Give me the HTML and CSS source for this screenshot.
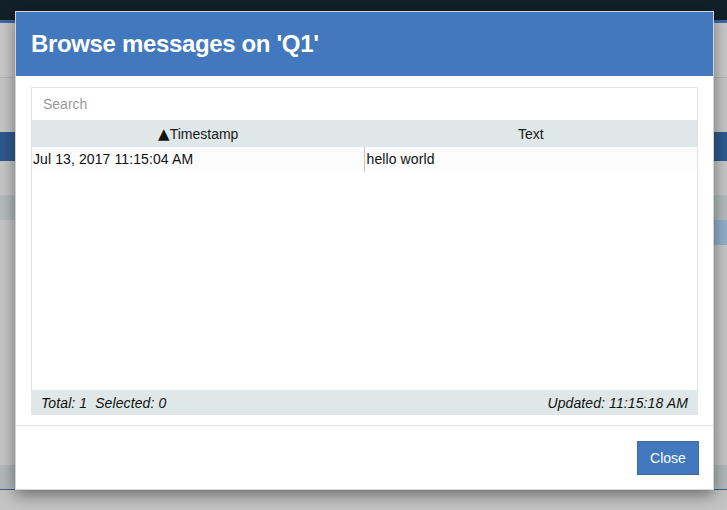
FILE: index.html
```html
<!DOCTYPE html>
<html>
<head>
<meta charset="utf-8">
<title>Browse messages</title>
<link rel="stylesheet" href="styles.css">
</head>
<body>
<div class="page">
  <div class="band topbar"></div>
  <div class="band accent"></div>
  <div class="band nav"></div>
  <div class="band gray tall"></div>
  <div class="band tabbar"></div>
  <div class="band gray mid"></div>
  <div class="band thead"></div>
  <div class="band selrow"><div class="sel-spacer"></div><div class="sel-cell"><span class="sel-mark"></span></div></div>
  <div class="band gray rest"></div>
  <div class="band tfoot"></div>
  <div class="band bottom"></div>
</div>

<div class="modal">
  <div class="modal-header">
    <h1 class="modal-title">Browse messages on 'Q1'</h1>
  </div>
  <div class="modal-body">
    <div class="grid">
      <div class="search">Search</div>
      <div class="grid-head">
        <div class="hcell"><span class="sort">&#9650;</span>Timestamp</div>
        <div class="hcell">Text</div>
      </div>
      <div class="grid-row">
        <div class="cell">Jul 13, 2017 11:15:04 AM</div>
        <div class="cell divider">hello world</div>
      </div>
      <div class="grid-empty"></div>
      <div class="grid-foot">
        <span class="stats">Total: 1&nbsp;&nbsp;Selected: 0</span>
        <span class="updated">Updated: 11:15:18 AM</span>
      </div>
    </div>
  </div>
  <div class="modal-footer">
    <button class="btn-close">Close</button>
  </div>
</div>
</body>
</html>
```

FILE: styles.css
```css
html, body {
  margin: 0;
  padding: 0;
}
body {
  width: 727px;
  height: 510px;
  overflow: hidden;
  background: #c4c4c4;
  font-family: "Liberation Sans", Arial, Helvetica, sans-serif;
  font-size: 14px;
  color: #111;
  position: relative;
}

.page {
  display: flex;
  flex-direction: column;
}
.band { width: 100%; }
.topbar { height: 20px; background: #12202a; }
.accent { height: 3px; background: #3e6aa0; }
.nav { height: 54px; background: #c9c9c9; border-bottom: 1px solid #b6b6b6; }
.gray { background: #c6c6c6; }
.tall { height: 54px; }
.tabbar { height: 29px; background: #2e5a8e; }
.mid { height: 34px; }
.thead { height: 25px; background: #b3bbbb; }
.selrow { height: 25px; display: flex; background: #c6c6c6; }
.sel-spacer { flex: 1; }
.sel-cell { width: 30px; background: #92afc8; display: flex; align-items: center; }
.sel-mark { width: 2px; height: 10px; margin-left: 15px; background: #2c4a6c; }
.rest { height: 220px; }
.tfoot { height: 24px; background: #b1b9b9; border-bottom: 1px solid #3b5f8e; }
.bottom { height: 20px; background: #c4c4c4; }

/* modal */
.modal {
  position: absolute;
  left: 15px;
  top: 11px;
  width: 699px;
  height: 479px;
  box-sizing: border-box;
  border: 1px solid #cfd3d6;
  background: #fff;
  box-shadow: 0 5px 15px rgba(0, 0, 0, 0.45);
  display: flex;
  flex-direction: column;
}
.modal-header {
  height: 64px;
  background: #4178be;
  display: flex;
  align-items: center;
  padding: 0 15px;
  flex-shrink: 0;
}
.modal-title {
  margin: 0;
  color: #fff;
  font-size: 24px;
  font-weight: bold;
  letter-spacing: -0.35px;
  line-height: 1;
}
.modal-body {
  padding: 11px 15px 10px 15px;
  border-bottom: 1px solid #e5e5e5;
}
.grid {
  height: 328px;
  box-sizing: border-box;
  border: 1px solid #e3e3e3;
  border-bottom: none;
  display: flex;
  flex-direction: column;
}
.search {
  height: 32px;
  line-height: 32px;
  padding-left: 11px;
  color: #999;
  flex-shrink: 0;
}
.grid-head {
  height: 27px;
  background: #dfe7e8;
  display: flex;
  flex-shrink: 0;
}
.hcell {
  flex: 1;
  text-align: center;
  line-height: 28px;
  color: #1a1a1a;
}
.sort {
  font-family: "DejaVu Sans", sans-serif;
  font-size: 15px;
  line-height: 1;
  color: #111;
}
.grid-row {
  height: 25px;
  background: #fcfcfc;
  display: flex;
  flex-shrink: 0;
}
.cell {
  flex: 1;
  line-height: 25px;
  padding-left: 1px;
  color: #111;
  letter-spacing: 0.1px;
}
.divider {
  border-left: 1px solid #c6c6c6;
  padding-left: 2px;
}
.grid-empty { flex: 1; }
.grid-foot {
  height: 25px;
  margin: 0 -1px;
  background: #dfe7e8;
  display: flex;
  justify-content: space-between;
  align-items: center;
  padding: 0 10px 0 10px;
  font-style: italic;
  color: #111;
  letter-spacing: 0.1px;
  flex-shrink: 0;
}
.modal-footer {
  flex: 1;
  display: flex;
  justify-content: flex-end;
  align-items: flex-start;
  padding: 15px 14px 0 0;
}
.btn-close {
  width: 62px;
  height: 34px;
  background: #4178be;
  border: 1px solid #3a6aa6;
  border-radius: 0;
  color: #fff;
  font-family: "Liberation Sans", Arial, Helvetica, sans-serif;
  font-size: 14px;
  padding: 0;
}
```
